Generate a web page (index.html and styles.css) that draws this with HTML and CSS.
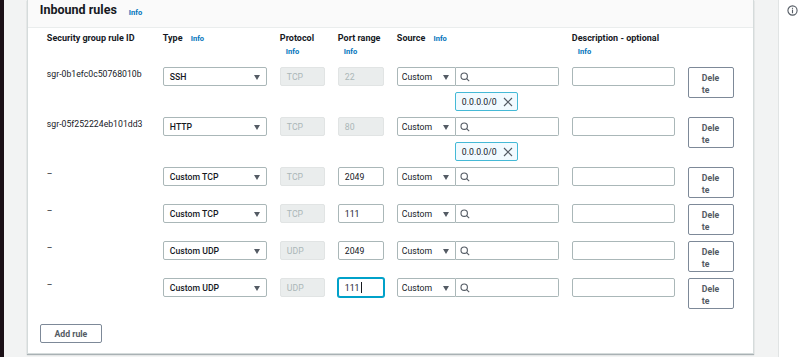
FILE: index.html
```html
<!DOCTYPE html>
<html lang="en">
<head>
  <meta charset="UTF-8">
  <meta name="viewport" content="width=device-width, initial-scale=1">
  <title>Inbound rules</title>
  <link rel="stylesheet" href="styles.css">
</head>
<body>

<div class="edge"></div>

<div class="main">
  <div class="card">
    <div class="card-header">
      <h2>Inbound rules</h2>
      <a class="info" href="#">Info</a>
    </div>

    <div class="card-body">
      <!-- Column headers -->
      <div class="rule-grid col-heads">
        <div class="col-head">Security group rule ID</div>
        <div class="col-head">Type <a class="info" href="#">Info</a></div>
        <div class="col-head">Protocol<br><a class="info sub" href="#">Info</a></div>
        <div class="col-head">Port range<br><a class="info sub" href="#">Info</a></div>
        <div class="col-head">Source <a class="info" href="#">Info</a></div>
        <div class="col-head">Description - optional<br><a class="info sub" href="#">Info</a></div>
        <div></div>
      </div>

      <div class="rules">
        <div class="rule-grid rule">
          <div class="rule-id">sgr-0b1efc0c50768010b</div>
          <div class="field select strong">SSH<span class="caret"></span></div>
          <div class="field disabled">TCP</div>
          <div class="field disabled">22</div>
          <div class="source">
            <div class="source-row">
              <div class="field select src-select">Custom<span class="caret"></span></div>
              <div class="field search"><svg viewBox="0 0 10 10" width="10" height="10"><circle cx="4.2" cy="4.2" r="3.2" fill="none" stroke="#545b64" stroke-width="1.1"/><line x1="6.6" y1="6.6" x2="9.2" y2="9.2" stroke="#545b64" stroke-width="1.1"/></svg></div>
            </div>
            <div class="chip">0.0.0.0/0<svg viewBox="0 0 10 10" width="10" height="10"><path d="M1 1 L9 9 M9 1 L1 9" stroke="#545b64" stroke-width="1.2"/></svg></div>
          </div>
          <div class="field"></div>
          <button class="delete-btn">Delete</button>
        </div>

        <div class="rule-grid rule">
          <div class="rule-id">sgr-05f252224eb101dd3</div>
          <div class="field select strong">HTTP<span class="caret"></span></div>
          <div class="field disabled">TCP</div>
          <div class="field disabled">80</div>
          <div class="source">
            <div class="source-row">
              <div class="field select src-select">Custom<span class="caret"></span></div>
              <div class="field search"><svg viewBox="0 0 10 10" width="10" height="10"><circle cx="4.2" cy="4.2" r="3.2" fill="none" stroke="#545b64" stroke-width="1.1"/><line x1="6.6" y1="6.6" x2="9.2" y2="9.2" stroke="#545b64" stroke-width="1.1"/></svg></div>
            </div>
            <div class="chip">0.0.0.0/0<svg viewBox="0 0 10 10" width="10" height="10"><path d="M1 1 L9 9 M9 1 L1 9" stroke="#545b64" stroke-width="1.2"/></svg></div>
          </div>
          <div class="field"></div>
          <button class="delete-btn">Delete</button>
        </div>

        <div class="rule-grid rule">
          <div class="rule-id">–</div>
          <div class="field select strong">Custom TCP<span class="caret"></span></div>
          <div class="field disabled">TCP</div>
          <div class="field">2049</div>
          <div class="source">
            <div class="source-row">
              <div class="field select src-select">Custom<span class="caret"></span></div>
              <div class="field search"><svg viewBox="0 0 10 10" width="10" height="10"><circle cx="4.2" cy="4.2" r="3.2" fill="none" stroke="#545b64" stroke-width="1.1"/><line x1="6.6" y1="6.6" x2="9.2" y2="9.2" stroke="#545b64" stroke-width="1.1"/></svg></div>
            </div>
          </div>
          <div class="field"></div>
          <button class="delete-btn">Delete</button>
        </div>

        <div class="rule-grid rule">
          <div class="rule-id">–</div>
          <div class="field select strong">Custom TCP<span class="caret"></span></div>
          <div class="field disabled">TCP</div>
          <div class="field">111</div>
          <div class="source">
            <div class="source-row">
              <div class="field select src-select">Custom<span class="caret"></span></div>
              <div class="field search"><svg viewBox="0 0 10 10" width="10" height="10"><circle cx="4.2" cy="4.2" r="3.2" fill="none" stroke="#545b64" stroke-width="1.1"/><line x1="6.6" y1="6.6" x2="9.2" y2="9.2" stroke="#545b64" stroke-width="1.1"/></svg></div>
            </div>
          </div>
          <div class="field"></div>
          <button class="delete-btn">Delete</button>
        </div>

        <div class="rule-grid rule">
          <div class="rule-id">–</div>
          <div class="field select strong">Custom UDP<span class="caret"></span></div>
          <div class="field disabled">UDP</div>
          <div class="field">2049</div>
          <div class="source">
            <div class="source-row">
              <div class="field select src-select">Custom<span class="caret"></span></div>
              <div class="field search"><svg viewBox="0 0 10 10" width="10" height="10"><circle cx="4.2" cy="4.2" r="3.2" fill="none" stroke="#545b64" stroke-width="1.1"/><line x1="6.6" y1="6.6" x2="9.2" y2="9.2" stroke="#545b64" stroke-width="1.1"/></svg></div>
            </div>
          </div>
          <div class="field"></div>
          <button class="delete-btn">Delete</button>
        </div>

        <div class="rule-grid rule">
          <div class="rule-id">–</div>
          <div class="field select strong">Custom UDP<span class="caret"></span></div>
          <div class="field disabled">UDP</div>
          <div class="field focused">111<span class="text-cursor"></span></div>
          <div class="source">
            <div class="source-row">
              <div class="field select src-select">Custom<span class="caret"></span></div>
              <div class="field search"><svg viewBox="0 0 10 10" width="10" height="10"><circle cx="4.2" cy="4.2" r="3.2" fill="none" stroke="#545b64" stroke-width="1.1"/><line x1="6.6" y1="6.6" x2="9.2" y2="9.2" stroke="#545b64" stroke-width="1.1"/></svg></div>
            </div>
          </div>
          <div class="field"></div>
          <button class="delete-btn">Delete</button>
        </div>
      </div>

      <button class="add-btn">Add rule</button>
    </div>
  </div>
</div>

<div class="side">
  <svg class="side-info" viewBox="0 0 12 12" width="11" height="11"><circle cx="6" cy="6" r="5" fill="none" stroke="#545b64" stroke-width="1.2"/><rect x="5.4" y="5" width="1.2" height="4" fill="#545b64"/><rect x="5.4" y="3" width="1.2" height="1.2" fill="#545b64"/></svg>
</div>

</body>
</html>
```

FILE: styles.css
```css
body {
  font-family: Roboto, "Liberation Sans", sans-serif;
  color: #16191f;
  margin: 0;
  height: 357px;
  display: flex;
  overflow: hidden;
  background-color: #f2f3f3;
}

.edge {
  width: 4px;
  background-color: #1b1016;
}

.main {
  flex: 1;
  padding: 0 24px 0 23px;
}

.side {
  width: 22px;
  background-color: #fff;
  border-left: 1px solid #e1e4e4;
  position: relative;
}

.side-info {
  position: absolute;
  top: 5px;
  left: 8px;
}

.card {
  background-color: #fff;
  border: 1px solid #d5dbdb;
  border-top: none;
  box-shadow: 0 1px 1px 0 rgba(0, 28, 36, 0.3);
  height: 354px;
  box-sizing: border-box;
}

.card-header {
  background-color: #fafafa;
  border-bottom: 1px solid #eaeded;
  height: 28px;
  box-sizing: border-box;
  padding: 2px 12px 0;
  display: flex;
  align-items: flex-start;
  gap: 6px;
}

.card-header h2 {
  margin: 0;
  font-size: 12.5px;
  line-height: 16px;
  font-weight: 700;
}

.card-header .info {
  line-height: 21px;
}

.info {
  color: #0073bb;
  font-size: 7.5px;
  font-weight: 700;
  text-decoration: none;
  margin-left: 6px;
}

.card-body {
  padding: 4px 19px 0;
}

.rule-grid {
  display: grid;
  grid-template-columns: 103px 104px 45px 46px 162px 103px 46px;
  column-gap: 13px;
}

.col-head {
  font-size: 9px;
  font-weight: 700;
  line-height: 12.5px;
}

.col-heads {
  height: 35px;
}

.rules {
  display: flex;
  flex-direction: column;
  gap: 6px;
}

.rule {
  align-items: start;
  font-size: 8.7px;
}

.rule-id {
  padding-top: 1px;
  line-height: 12px;
}

.field {
  height: 19px;
  box-sizing: border-box;
  border: 1px solid #aab7b8;
  border-radius: 2px;
  background-color: #fff;
  padding: 0 6px;
  display: flex;
  align-items: center;
  position: relative;
}

.strong {
  font-weight: 500;
}

.select .caret {
  position: absolute;
  right: 6px;
  top: 7px;
  border-left: 3.5px solid transparent;
  border-right: 3.5px solid transparent;
  border-top: 5px solid #545b64;
}

.disabled {
  background-color: #eaeded;
  border-color: #e1e4e4;
  color: #aab7b8;
}

.focused {
  border-color: #00a1c9;
  box-shadow: 0 0 0 1px #00a1c9;
}

.text-cursor {
  display: inline-block;
  width: 1px;
  height: 11px;
  background-color: #16191f;
  margin-left: 1px;
}

.source-row {
  display: flex;
}

.src-select {
  width: 59px;
  border-radius: 2px 0 0 2px;
  padding-left: 4px;
}

.search {
  flex: 1;
  border-left: none;
  border-radius: 0 2px 2px 0;
  padding-left: 4px;
}

.chip {
  margin: 6px 0 0 58px;
  width: 63px;
  height: 19px;
  box-sizing: border-box;
  background-color: #f1faff;
  border: 1px solid #44b9d6;
  border-radius: 2px;
  font-size: 8.7px;
  display: flex;
  align-items: center;
  justify-content: space-between;
  padding: 0 4px 0 6px;
}

.delete-btn, .add-btn {
  font-family: Roboto, "Liberation Sans", sans-serif;
  background-color: #fff;
  color: #545b64;
  border: 1px solid #7d8998;
  border-radius: 2px;
  font-size: 8.7px;
  font-weight: 700;
  cursor: pointer;
}

.delete-btn {
  width: 46px;
  height: 31px;
  padding: 3px 12px 0 13px;
  text-align: left;
  line-height: 12px;
  word-break: break-all;
  align-self: start;
}

.add-btn {
  margin: 15px 0 0 -7px;
  width: 62px;
  height: 19px;
  padding: 0;
}
```
